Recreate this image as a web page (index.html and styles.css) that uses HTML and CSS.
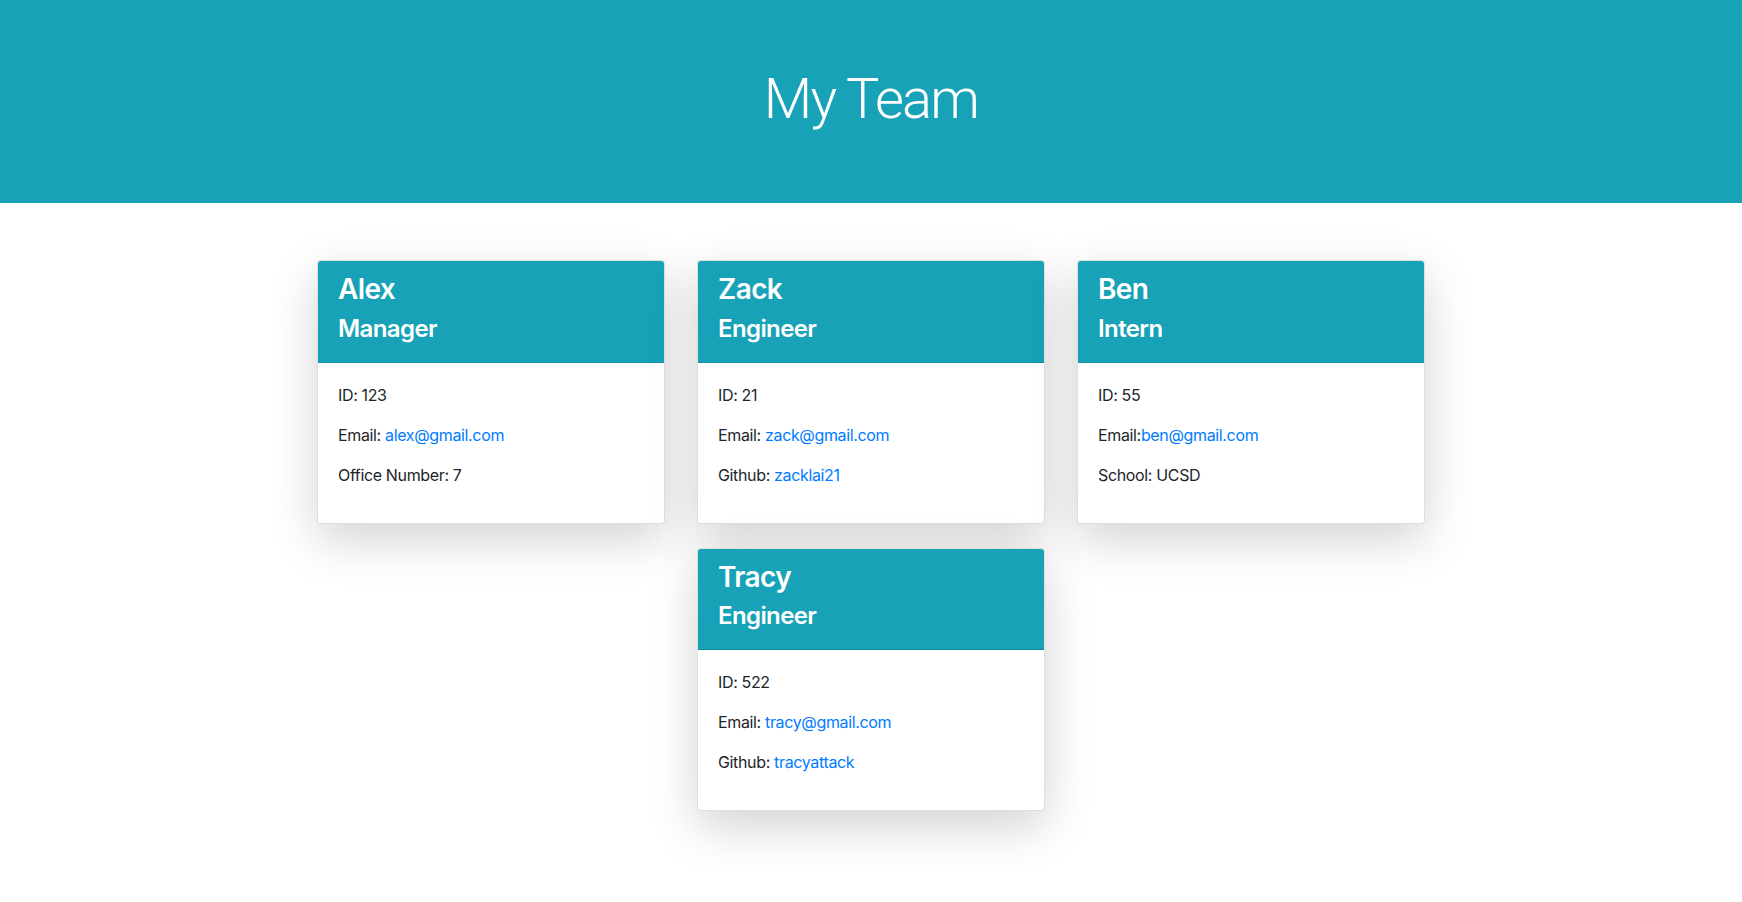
FILE: index.html
```html
<!DOCTYPE html>
<html lang="en">
<head>
<meta charset="utf-8">
<title>My Team</title>
<link rel="stylesheet" href="styles.css">
</head>
<body>
<header class="jumbotron">
  <h1 class="title">My Team</h1>
</header>
<main class="team">
  <div class="card">
    <div class="card-header">
      <h2 class="name">Alex</h2>
      <h3 class="role">Manager</h3>
    </div>
    <div class="card-body">
      <p>ID: 123</p>
      <p>Email: <a href="#">alex@gmail.com</a></p>
      <p>Office Number: 7</p>
    </div>
  </div>
  <div class="card">
    <div class="card-header">
      <h2 class="name">Zack</h2>
      <h3 class="role">Engineer</h3>
    </div>
    <div class="card-body">
      <p>ID: 21</p>
      <p>Email: <a href="#">zack@gmail.com</a></p>
      <p>Github: <a href="#">zacklai21</a></p>
    </div>
  </div>
  <div class="card">
    <div class="card-header">
      <h2 class="name">Ben</h2>
      <h3 class="role">Intern</h3>
    </div>
    <div class="card-body">
      <p>ID: 55</p>
      <p>Email:<a href="#">ben@gmail.com</a></p>
      <p>School: UCSD</p>
    </div>
  </div>
  <div class="card">
    <div class="card-header">
      <h2 class="name">Tracy</h2>
      <h3 class="role">Engineer</h3>
    </div>
    <div class="card-body">
      <p>ID: 522</p>
      <p>Email: <a href="#">tracy@gmail.com</a></p>
      <p>Github: <a href="#">tracyattack</a></p>
    </div>
  </div>
</main>
</body>
</html>
```

FILE: styles.css
```css
* { box-sizing: border-box; }
html, body {
  margin: 0;
  padding: 0;
  background: #fff;
}
body {
  font-family: Inter, "Liberation Sans", Arial, sans-serif;
  font-size: 16px;
  line-height: 1.5;
  color: #212529;
}
.jumbotron {
  background: #17a2b8;
  padding: 66px 32px 62px;
  text-align: center;
}
.title {
  margin: 0 0 8px;
  font-family: Roboto, Inter, sans-serif;
  font-size: 56px;
  font-weight: 300;
  line-height: 1.2;
  color: #fff;
  letter-spacing: -1.8px;
}
.team {
  width: 1140px;
  margin: 0 auto;
  padding: 33px 0 90px;
  display: flex;
  flex-wrap: wrap;
  justify-content: center;
}
.card {
  width: 348px;
  margin: 24px 16px 0;
  background: #fff;
  border: 1px solid rgba(0,0,0,0.125);
  border-radius: 4px;
  box-shadow: 0 16px 48px rgba(0,0,0,0.175);
}
.card-header {
  background: #17a2b8;
  color: #fff;
  padding: 12px 20px;
  border-radius: 3px 3px 0 0;
  border-bottom: 1px solid rgba(0,0,0,0.125);
}
.name {
  margin: 0 0 8px;
  font-size: 28px;
  font-weight: 600;
  line-height: 1.2;
  letter-spacing: -0.6px;
}
.role {
  margin: 0 0 6px;
  font-size: 24px;
  font-weight: 600;
  line-height: 1.2;
  letter-spacing: -0.6px;
}
.card-body {
  padding: 20px;
}
.card-body p {
  margin: 0 0 16px;
  font-size: 16px;
  letter-spacing: -0.35px;
}
.card-body a {
  color: #007bff;
  text-decoration: none;
}
```
